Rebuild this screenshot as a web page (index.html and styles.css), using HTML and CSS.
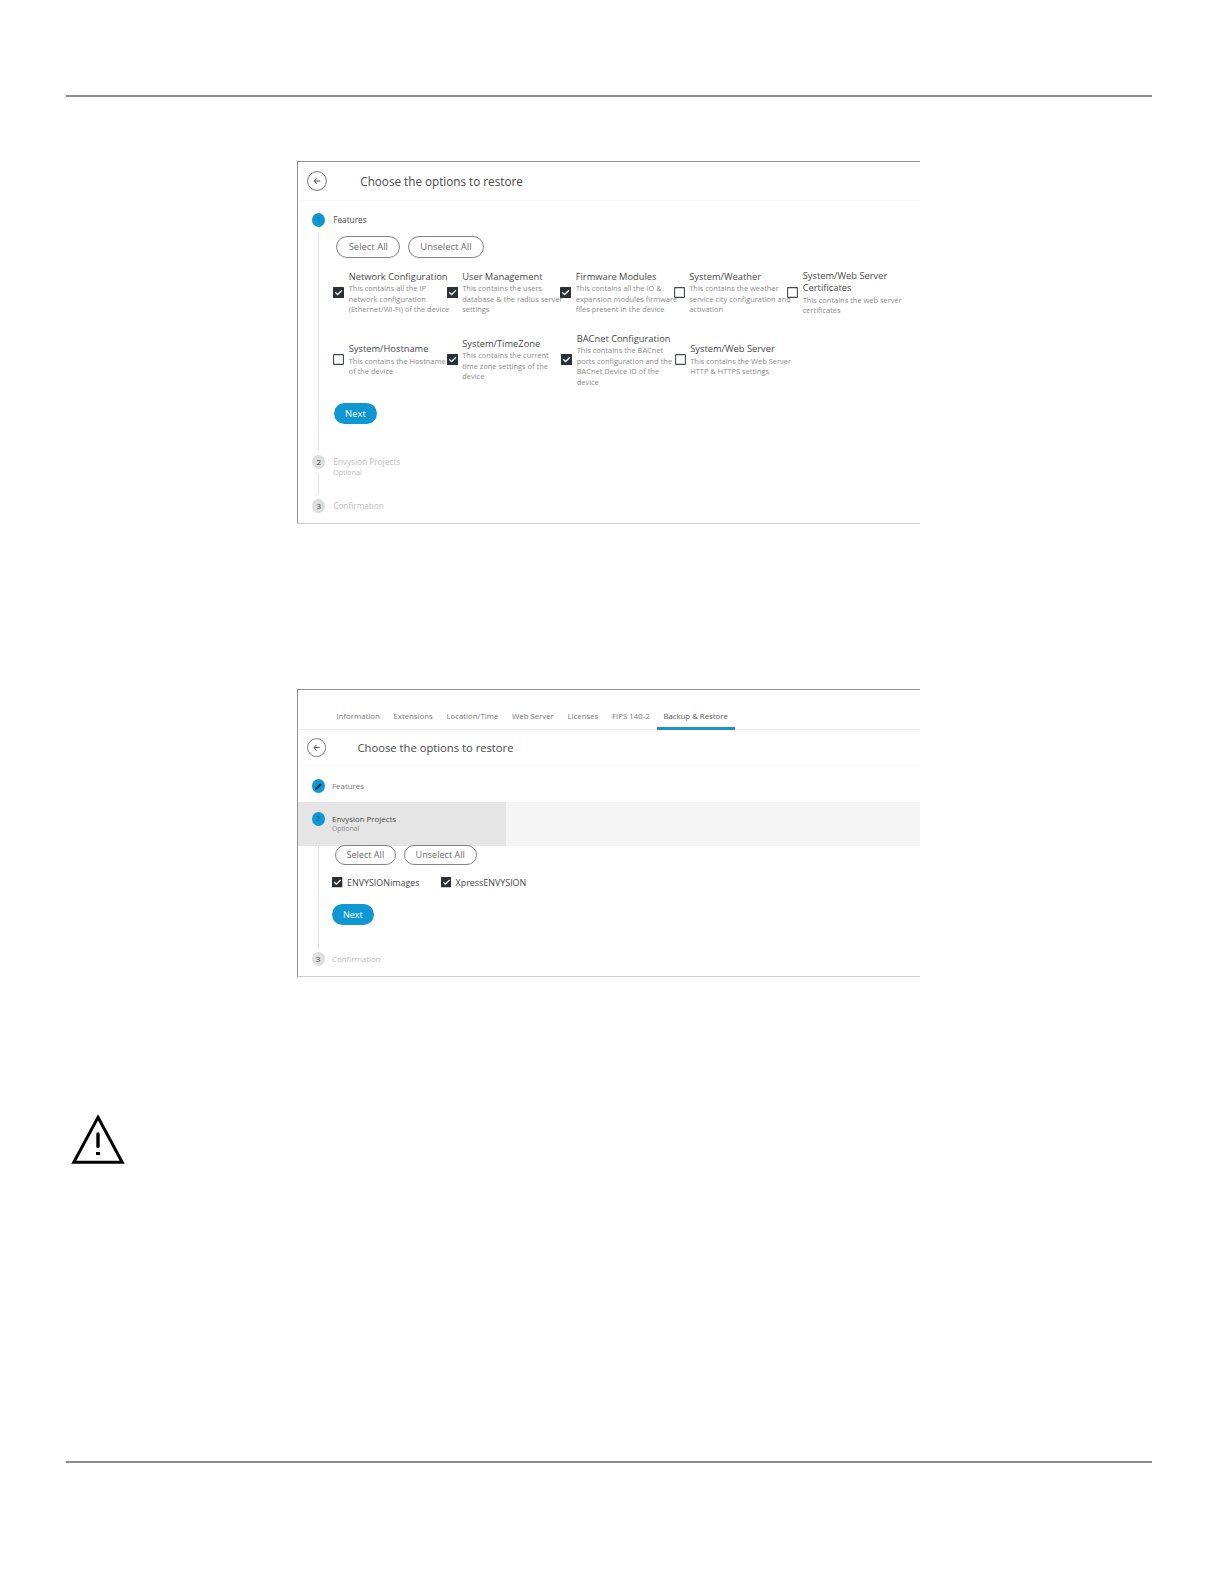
FILE: index.html
```
<!DOCTYPE html>
<html lang="en">
<head>
    <meta charset="UTF-8">
    <meta name="viewport" content="width=device-width, initial-scale=1.0">
    <title>Backup &amp; Restore</title>
    <link rel="stylesheet" href="styles.css">
</head>
<body>
    <svg class="symbols" width="0" height="0">
        <symbol id="back" viewBox="0 0 20 20">
            <circle cx="10" cy="10" r="9.4" fill="none" stroke="#666" stroke-width="0.9"/>
            <path d="M13.2 10H7.5M10 7.2L7.2 10L10 12.8" fill="none" stroke="#444" stroke-width="1"/>
        </symbol>
        <symbol id="checked" viewBox="0 0 11 11">
            <rect width="11" height="11" rx="0.6" fill="#2b3036"/>
            <path d="M2.2 5.2L4.6 7.5L9 3.2" fill="none" stroke="#fff" stroke-width="1.3"/>
        </symbol>
        <symbol id="unchecked" viewBox="0 0 11 11">
            <rect x="0.6" y="0.6" width="9.8" height="9.8" rx="0.5" fill="#fff" stroke="#444b4d" stroke-width="1.1"/>
        </symbol>
    </svg>

    <div class="page">
        <section class="panel panel-features">
            <header class="panel-header">
                <svg class="back"><use href="#back"/></svg>
                <h2>Choose the options to restore</h2>
            </header>
            <div class="step step-open">
                <div class="rail"><span class="badge active">1</span><span class="line"></span></div>
                <div class="step-content">
                    <h3>Features</h3>
                    <div class="buttons">
                        <button class="btn">Select All</button>
                        <button class="btn btn-wide">Unselect All</button>
                    </div>
                    <div class="options">
                        <div class="option">
                            <svg class="check"><use href="#checked"/></svg>
                            <div><h4>Network Configuration</h4><p>This contains all the IP<br>network configuration<br>(Ethernet/Wi-Fi) of the device</p></div>
                        </div>
                        <div class="option">
                            <svg class="check"><use href="#checked"/></svg>
                            <div><h4>User Management</h4><p>This contains the users<br>database &amp; the radius server<br>settings</p></div>
                        </div>
                        <div class="option">
                            <svg class="check"><use href="#checked"/></svg>
                            <div><h4>Firmware Modules</h4><p>This contains all the IO &amp;<br>expansion modules firmware<br>files present in the device</p></div>
                        </div>
                        <div class="option">
                            <svg class="check"><use href="#unchecked"/></svg>
                            <div><h4>System/Weather</h4><p>This contains the weather<br>service city configuration and<br>activation</p></div>
                        </div>
                        <div class="option">
                            <svg class="check"><use href="#unchecked"/></svg>
                            <div><h4>System/Web Server<br>Certificates</h4><p>This contains the web server<br>certificates</p></div>
                        </div>
                        <div class="option">
                            <svg class="check"><use href="#unchecked"/></svg>
                            <div><h4>System/Hostname</h4><p>This contains the Hostname<br>of the device</p></div>
                        </div>
                        <div class="option">
                            <svg class="check"><use href="#checked"/></svg>
                            <div><h4>System/TimeZone</h4><p>This contains the current<br>time zone settings of the<br>device</p></div>
                        </div>
                        <div class="option option-shifted">
                            <svg class="check"><use href="#checked"/></svg>
                            <div><h4>BACnet Configuration</h4><p>This contains the BACnet<br>ports configuration and the<br>BACnet Device ID of the<br>device</p></div>
                        </div>
                        <div class="option option-shifted">
                            <svg class="check"><use href="#unchecked"/></svg>
                            <div><h4>System/Web Server</h4><p>This contains the Web Server<br>HTTP &amp; HTTPS settings</p></div>
                        </div>
                    </div>
                    <button class="btn btn-next">Next</button>
                </div>
            </div>
            <div class="step step-optional disabled">
                <div class="rail"><span class="badge">2</span><span class="line"></span></div>
                <div class="step-content">
                    <h3>Envysion Projects</h3>
                    <small>Optional</small>
                </div>
            </div>
            <div class="step disabled">
                <div class="rail"><span class="badge">3</span></div>
                <div class="step-content"><h3>Confirmation</h3></div>
            </div>
        </section>

        <section class="panel panel-projects">
            <nav class="tabs">
                <a>Information</a>
                <a>Extensions</a>
                <a>Location/Time</a>
                <a>Web Server</a>
                <a>Licenses</a>
                <a>FIPS 140-2</a>
                <a class="current">Backup &amp; Restore</a>
            </nav>
            <header class="panel-header">
                <svg class="back"><use href="#back"/></svg>
                <h2>Choose the options to restore</h2>
            </header>
            <div class="step done">
                <div class="rail">
                    <span class="badge active">
                        <svg width="9" height="9" viewBox="0 0 9 9"><path d="M1 8L1.7 5.8L6.2 1.2L7.9 2.7L3.3 7.3Z" fill="#123449"/></svg>
                    </span>
                </div>
                <div class="step-content"><h3>Features</h3></div>
            </div>
            <div class="step band">
                <div class="rail"><span class="badge active">2</span></div>
                <div class="step-content">
                    <h3>Envysion Projects</h3>
                    <small>Optional</small>
                </div>
            </div>
            <div class="step step-body">
                <div class="rail"><span class="line"></span></div>
                <div class="step-content">
                    <div class="buttons">
                        <button class="btn">Select All</button>
                        <button class="btn btn-wide">Unselect All</button>
                    </div>
                    <div class="projects">
                        <div class="option"><svg class="check"><use href="#checked"/></svg><span>ENVYSIONimages</span></div>
                        <div class="option"><svg class="check"><use href="#checked"/></svg><span>XpressENVYSION</span></div>
                    </div>
                    <button class="btn btn-next">Next</button>
                </div>
            </div>
            <div class="step disabled">
                <div class="rail"><span class="badge">3</span></div>
                <div class="step-content"><h3>Confirmation</h3></div>
            </div>
        </section>

        <svg class="warning" width="54" height="51" viewBox="0 0 54 51">
            <path d="M27 3.3L51.2 48.3H2.8Z" fill="none" stroke="#000" stroke-width="3"/>
            <path d="M27 20V32.5" stroke="#000" stroke-width="3.4" stroke-linecap="round"/>
            <rect x="25" y="38" width="4" height="3" fill="#000"/>
        </svg>
    </div>
</body>
</html>
```
FILE: styles.css
```
:root {
    --accent: #0f97d4;
    --text: #484848;
    --muted: #8c8c8c;
    --disabled: #bdbdbd;
}

* {
    margin: 0;
    padding: 0;
    box-sizing: border-box;
}

body {
    background: #fff;
    color: var(--text);
    font-family: "Open Sans", sans-serif;
}

.symbols {
    display: none;
}

.page {
    width: 1086px;
    height: 1368px;
    margin: 95px 0 0 66px;
    border-top: 2px solid #8c8c8c;
    border-bottom: 2px solid #8c8c8c;
}

/* Panels */
.panel {
    width: 623px;
    margin-left: 231px;
    border: solid #929292;
    border-width: 1px 0 1px 1px;
    border-bottom-color: #cfcfcf;
    font-size: 10px;
    white-space: nowrap;
}

.panel-features {
    height: 363px;
    margin-top: 64px;
}

.panel-projects {
    height: 288px;
    margin-top: 165px;
    font-size: 9.6px;
}

.panel-header {
    display: flex;
    align-items: center;
    height: 39px;
    margin-bottom: 12px;
    padding-left: 9.3px;
    border-bottom: 1px solid #fafafa;
}

.panel-projects .panel-header {
    height: 36px;
    margin-bottom: 13px;
    padding-left: 8.7px;
}

.back {
    width: 2em;
    height: 2em;
    margin-right: 3.3em;
}

h2 {
    font-size: 1.17em;
    font-weight: 400;
    line-height: 20px;
}

/* Steps */
.step {
    display: flex;
    padding-left: 14.2px;
}

.panel-projects .step {
    padding-left: 13.5px;
}

.rail {
    display: flex;
    flex-direction: column;
    align-items: center;
    width: 13px;
    margin-right: 8px;
}

.panel-projects .rail {
    margin-right: 7.5px;
}

.badge {
    display: flex;
    align-items: center;
    justify-content: center;
    width: 13px;
    height: 14px;
    border-radius: 50%;
    background: #dedede;
    color: #444;
    font-size: 8px;
    line-height: 14px;
}

.badge.active {
    background: var(--accent);
    color: #0b5f8a;
    font-size: 7px;
}

.line {
    flex: 1;
    width: 1px;
    margin: 5px 0;
    background: #e4e4e4;
}

h3 {
    font-size: 0.825em;
    font-weight: 400;
    line-height: 14px;
}

small {
    display: block;
    margin-top: -2px;
    color: var(--muted);
    font-size: 0.71em;
    line-height: 10px;
}

.disabled .step-content,
.disabled small {
    color: var(--disabled);
}

.step-open {
    height: 242px;
}

.step-optional {
    height: 44px;
}

.done {
    height: 23px;
    color: #777;
}

.band {
    height: 44px;
    padding-top: 10px;
    background: linear-gradient(to right, #e5e5e5 208px, #f5f5f5 208px);
}

.step-body {
    height: 106px;
}

.step-body .line {
    margin: 0 0 3px;
}

/* Buttons */
.buttons {
    display: flex;
    gap: 7.5px;
    margin: 9px 0 0 3px;
}

.step-body .buttons {
    margin: -1.5px 0 0 2.5px;
}

.btn {
    height: 2.31em;
    width: 6.8em;
    border: 0.9px solid #858585;
    border-radius: 2em;
    background: #fff;
    color: #6c6c6c;
    font-family: inherit;
    font-size: 0.945em;
    line-height: 1;
}

.btn-wide {
    width: 8.05em;
}

.btn-next {
    display: block;
    width: 4.6em;
    height: 2.25em;
    border: none;
    background: var(--accent);
    color: #fff;
}

.panel-features .btn-next {
    margin-left: 0.5px;
}

/* Options */
.options {
    display: grid;
    grid-template-columns: repeat(5, 113.5px);
    grid-auto-rows: 67px;
    margin: 1px 0 10px;
}

.option {
    display: flex;
    align-items: center;
    gap: 4.5px;
}

.options .option > div {
    padding-top: 1px;
}

.option-shifted {
    padding-left: 1px;
}

.check {
    flex: none;
    width: 1.1em;
    height: 1.1em;
}

h4 {
    font-size: 0.932em;
    font-weight: 400;
    line-height: 12.5px;
}

.option p {
    color: var(--muted);
    font-size: 0.747em;
    line-height: 10.5px;
}

.projects {
    display: flex;
    gap: 21px;
    height: 16px;
    margin: 9px 0 14px;
}

.projects span {
    font-size: 0.93em;
}

/* Tabs */
.tabs {
    display: flex;
    height: 40px;
    padding-left: 31.6px;
    border-bottom: 1px solid #f0f0f0;
}

.tabs a {
    height: 40px;
    padding: 16px 6.9px 0;
    color: #777;
    font-size: 0.813em;
    line-height: 20px;
}

.tabs .current {
    border-bottom: 3px solid #1b93c4;
    color: #555;
}

.warning {
    display: block;
    margin: 137px 0 0 5px;
}
```
